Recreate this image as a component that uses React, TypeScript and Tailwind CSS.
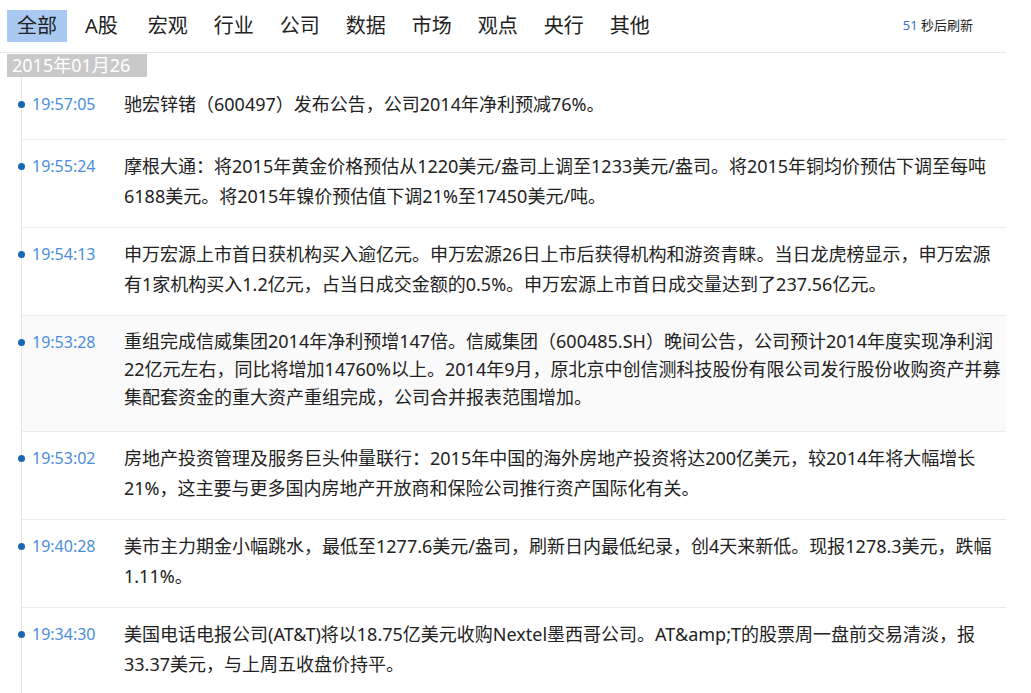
import React from "react";

const tabs = [
  { label: "全部", active: true, gap: "mr-[8px]" },
  { label: "A股", gap: "mr-[10px]" },
  { label: "宏观", gap: "mr-[6px]" },
  { label: "行业", gap: "mr-[6px]" },
  { label: "公司", gap: "mr-[6px]" },
  { label: "数据", gap: "mr-[6px]" },
  { label: "市场", gap: "mr-[6px]" },
  { label: "观点", gap: "mr-[6px]" },
  { label: "央行", gap: "mr-[6px]" },
  { label: "其他", gap: "mr-[6px]" },
];

type News = { time: string; text: string; hover?: boolean };

const news: News[] = [
  { time: "19:57:05", text: "驰宏锌锗（600497）发布公告，公司2014年净利预减76%。" },
  {
    time: "19:55:24",
    text: "摩根大通：将2015年黄金价格预估从1220美元/盎司上调至1233美元/盎司。将2015年铜均价预估下调至每吨6188美元。将2015年镍价预估值下调21%至17450美元/吨。",
  },
  {
    time: "19:54:13",
    text: "申万宏源上市首日获机构买入逾亿元。申万宏源26日上市后获得机构和游资青睐。当日龙虎榜显示，申万宏源有1家机构买入1.2亿元，占当日成交金额的0.5%。申万宏源上市首日成交量达到了237.56亿元。",
  },
  {
    time: "19:53:28",
    hover: true,
    text: "重组完成信威集团2014年净利预增147倍。信威集团（600485.SH）晚间公告，公司预计2014年度实现净利润22亿元左右，同比将增加14760%以上。2014年9月，原北京中创信测科技股份有限公司发行股份收购资产并募集配套资金的重大资产重组完成，公司合并报表范围增加。",
  },
  {
    time: "19:53:02",
    text: "房地产投资管理及服务巨头仲量联行：2015年中国的海外房地产投资将达200亿美元，较2014年将大幅增长21%，这主要与更多国内房地产开放商和保险公司推行资产国际化有关。",
  },
  {
    time: "19:40:28",
    text: "美市主力期金小幅跳水，最低至1277.6美元/盎司，刷新日内最低纪录，创4天来新低。现报1278.3美元，跌幅1.11%。",
  },
  {
    time: "19:34:30",
    text: "美国电话电报公司(AT&T)将以18.75亿美元收购Nextel墨西哥公司。AT&amp;T的股票周一盘前交易清淡，报33.37美元，与上周五收盘价持平。",
  },
];

export default function App() {
  return (
    <div className="w-[1006px] bg-white text-[#222] font-['Noto_Sans','Noto_Sans_CJK_SC',sans-serif]">
      {/* tabs */}
      <div className="flex items-center h-[53px] pl-[7px] border-b border-[#e8e8e8]">
        {tabs.map((t) => (
          <div
            key={t.label}
            className={`h-[32px] px-[10px] text-[20px] leading-[32px] ${t.gap} ${
              t.active ? "bg-[#a9c9f2]" : ""
            }`}
          >
            {t.label}
          </div>
        ))}
        <div className="ml-auto mr-[33px] text-[13px]">
          <span className="text-[#3d6fc4]">51</span> 秒后刷新
        </div>
      </div>

      <div className="ml-[7px] mt-[1px] w-[140px] h-[23px] bg-[#c9c9c9] text-white text-[18px] leading-[23px] pl-[5px]">
        2015年01月26
      </div>

      {/* timeline */}
      <ul className="ml-[21px] border-l border-[#e6e6e6]">
        {news.map((n, i) => (
          <li
            key={n.time}
            className={`relative flex border-b border-[#ebebeb] ${
              i === 0 ? "pt-[12px] pb-[20px]" : n.hover ? "pt-[11px] pb-[20px]" : "pt-[11px] pb-[16px]"
            } ${n.hover ? "bg-[#fafafa]" : ""}`}
          >
            <span
              className={`absolute left-[-4px] w-[7px] h-[7px] rounded-full bg-[#1866b4] ${
                i === 0 ? "top-[24px]" : "top-[23px]"
              }`}
            ></span>
            <div className="w-[102px] shrink-0 pl-[10px] text-[16px] leading-[30px] text-[#4a8edb]">
              {n.time}
            </div>
            <p
              className={`flex-1 pr-[2px] text-[18px] ${
                n.hover ? "leading-[28px]" : "leading-[30px]"
              }`}
            >
              {n.text}
            </p>
          </li>
        ))}
      </ul>
    </div>
  );
}
